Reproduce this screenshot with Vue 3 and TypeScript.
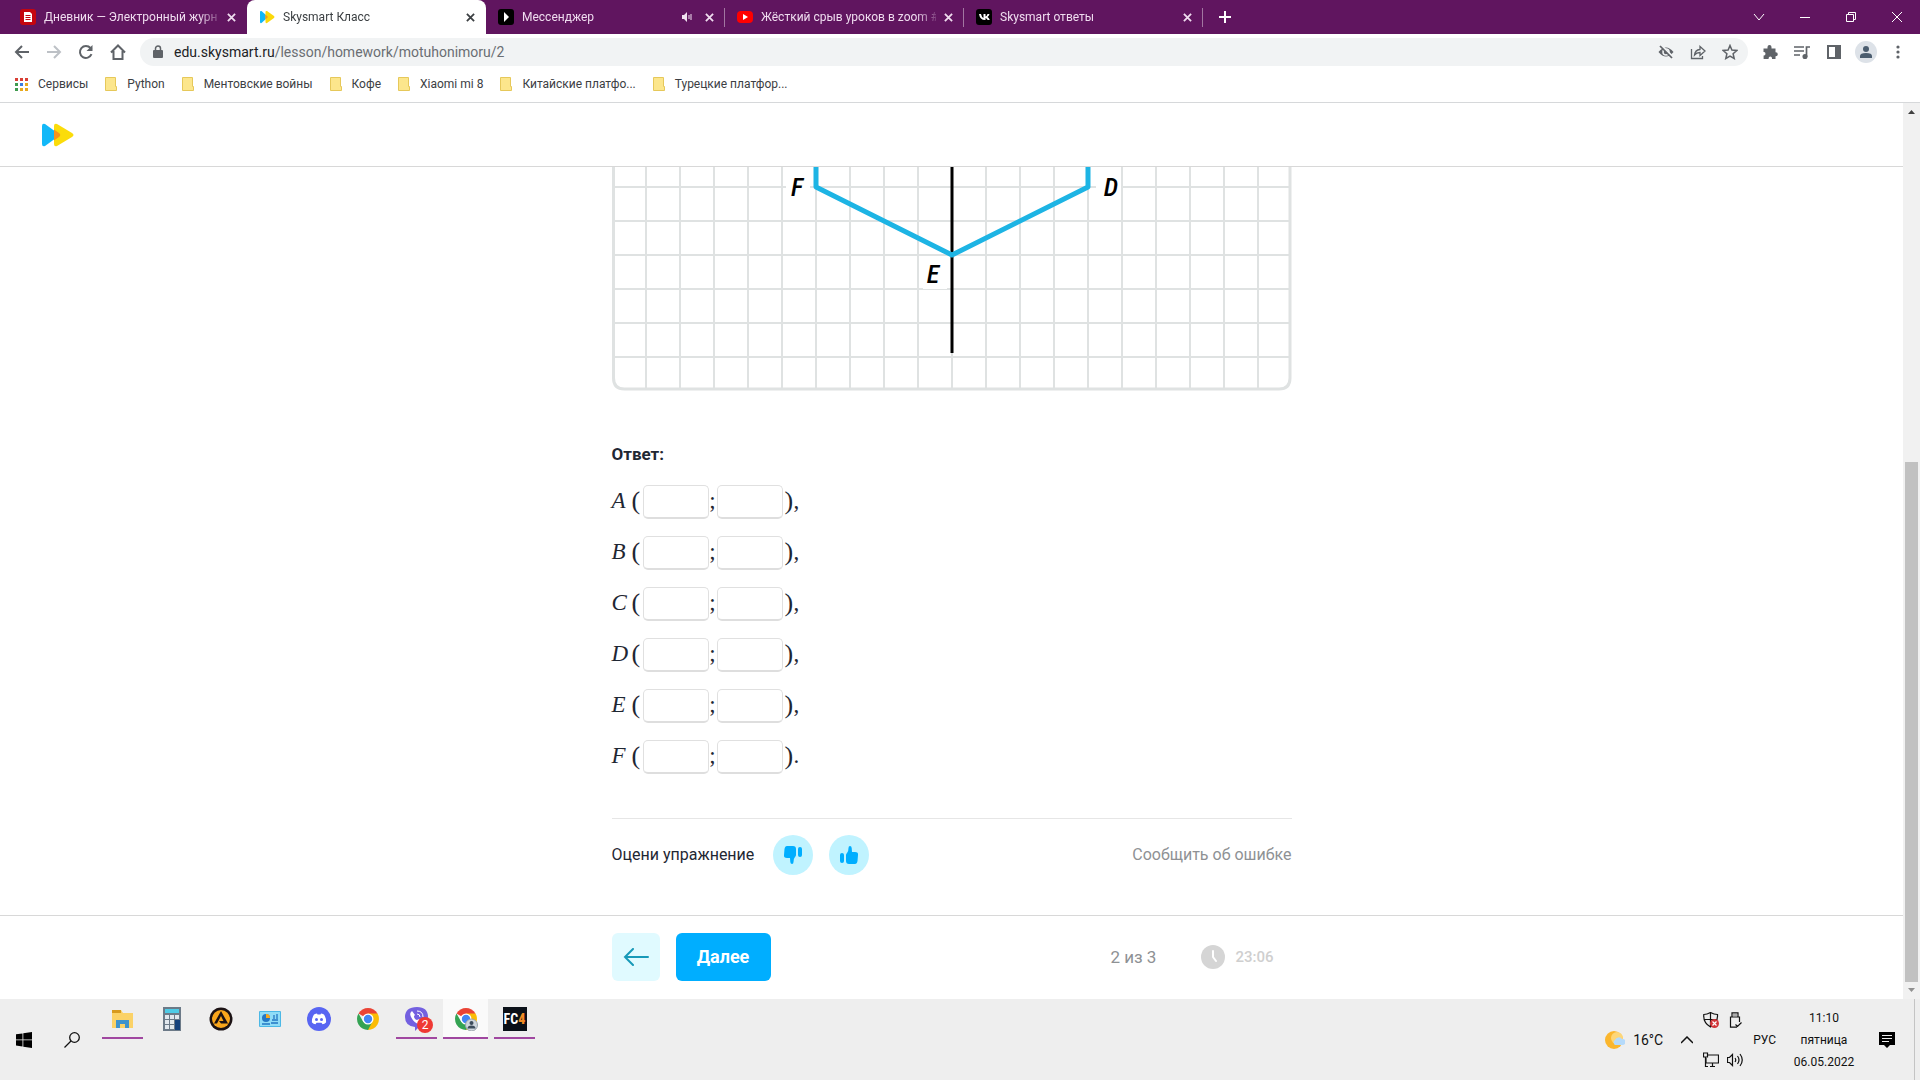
<script setup lang="ts">
import { reactive } from 'vue'

interface Tab {
  title: string
  icon: 'diary' | 'skysmart' | 'play' | 'youtube' | 'vk'
  active?: boolean
  sound?: boolean
}

const tabs: Tab[] = [
  { title: 'Дневник — Электронный журн', icon: 'diary' },
  { title: 'Skysmart Класс', icon: 'skysmart', active: true },
  { title: 'Мессенджер', icon: 'play', sound: true },
  { title: 'Жёсткий срыв уроков в zoom #', icon: 'youtube' },
  { title: 'Skysmart ответы', icon: 'vk' },
]

const bookmarks: string[] = [
  'Python',
  'Ментовские войны',
  'Кофе',
  'Xiaomi mi 8',
  'Китайские платфо...',
  'Турецкие платфор...',
]

const points = reactive(
  ['A', 'B', 'C', 'D', 'E', 'F'].map((name) => ({ name, x: '', y: '' })),
)

const columns = Array.from({ length: 19 }, (_, i) => (i + 1) * 34)
const rows = Array.from({ length: 6 }, (_, i) => 20 + i * 34)
const dots = ['#d93f35', '#d93f35', '#d93f35', '#3f9b4f', '#3b7de0', '#e8a91c', '#3f9b4f', '#e8a91c', '#e8a91c']
</script>

<template>
  <div class="screen">
    <header class="tabstrip">
      <div v-for="tab in tabs" :key="tab.title" class="tab" :class="{ active: tab.active }">
        <svg v-if="tab.icon === 'diary'" class="favicon" viewBox="0 0 16 16">
          <rect width="16" height="16" rx="3" fill="#c4060f" />
          <path d="M4 3h6l2 2v8H4z" fill="#fff" />
          <path d="M5.500 6.500h5M5.500 8.500h5M5.500 10.500h5" stroke="#c4060f" />
        </svg>
        <svg v-else-if="tab.icon === 'skysmart'" class="favicon" viewBox="0 0 32 28">
          <path d="M2 4q0-3 3-2l11 10q2 2 0 4L5 26q-3 1-3-2z" fill="#12b8f8" />
          <path d="M13 4q0-3 3-2l14 10q2 2 0 4L16 26q-3 1-3-2z" fill="#fbd90a" />
          <path d="M13 9l5 5-5 5z" fill="#f7931e" />
        </svg>
        <svg v-else-if="tab.icon === 'play'" class="favicon" viewBox="0 0 16 16">
          <rect width="16" height="16" rx="3" fill="#000" />
          <path d="M6 3l5 5-5 5z" fill="#fff" />
        </svg>
        <svg v-else-if="tab.icon === 'youtube'" class="favicon" viewBox="0 0 16 16">
          <rect y="2" width="16" height="12" rx="4" fill="#f00" />
          <path d="M6 5l5 3-5 3z" fill="#fff" />
        </svg>
        <svg v-else class="favicon" viewBox="0 0 16 16">
          <rect width="16" height="16" rx="3" fill="#000" />
          <path d="M3 5h2q.5 3 2.500 4V5h2v2.500q1.500-.5 2-2.500h2q-.5 2-2 3 1.700 1 2.300 3h-2.200q-.6-1.600-2.100-2v2H9Q4 11 3 5z" fill="#fff" />
        </svg>
        <span class="tab-title">{{ tab.title }}</span>
        <svg v-if="tab.sound" class="sound" viewBox="0 0 12 12">
          <path d="M1 4h2l3-3v10L3 8H1z" fill="#f0e0f0" />
          <path d="M8 4v4M10 3v6" stroke="#f0e0f0" fill="none" />
        </svg>
        <button class="tab-close" aria-label="Закрыть вкладку">
          <svg viewBox="0 0 10 10"><path d="M1 1l8 8M9 1l-8 8" /></svg>
        </button>
      </div>
      <button class="new-tab" aria-label="Новая вкладка">
        <svg viewBox="0 0 12 12"><path d="M6 0v12M0 6h12" stroke="#fff" stroke-width="2" /></svg>
      </button>
      <div class="window-buttons">
        <button aria-label="Поиск вкладок"><svg viewBox="0 0 12 12"><path d="M1 3l5 6 5-6" /></svg></button>
        <button aria-label="Свернуть"><svg viewBox="0 0 12 12"><path d="M1 6.500h10" /></svg></button>
        <button aria-label="Восстановить"><svg viewBox="0 0 12 12"><path d="M1.500 3.500h7v7h-7zM3.500 3.500v-2h7v7h-2" /></svg></button>
        <button aria-label="Закрыть"><svg viewBox="0 0 12 12"><path d="M1 1l10 10M11 1L1 11" /></svg></button>
      </div>
    </header>

    <div class="toolbar">
      <button class="tool" aria-label="Назад">
        <svg viewBox="0 0 16 16" class="line"><path d="M15 8H2M8 2L2 8l6 6" /></svg>
      </button>
      <button class="tool faded" aria-label="Вперёд">
        <svg viewBox="0 0 16 16" class="line"><path d="M1 8h13M8 2l6 6-6 6" /></svg>
      </button>
      <button class="tool" aria-label="Обновить">
        <svg viewBox="0 0 16 16" class="line"><path d="M13.500 10.200A6 6 0 1 1 12.500 4l1 1.500" /><path d="M14.500 1v6h-6z" fill="#5f6368" stroke="none" /></svg>
      </button>
      <button class="tool" aria-label="Домой">
        <svg viewBox="0 0 16 16" class="line"><path d="M1 8.500L8 1.500l7 7M3.500 7v8h9V7" /></svg>
      </button>
      <div class="omnibox">
        <svg class="lock" viewBox="0 0 10 14"><rect y="5" width="10" height="8" rx="1" fill="#5f6368" /><path d="M2.500 5V3.500a2.500 2.500 0 0 1 5 0V5" fill="none" stroke="#5f6368" stroke-width="1.500" /></svg>
        <div class="url">edu.skysmart.ru<span>/lesson/homework/motuhonimoru/2</span></div>
        <div class="omni-icons">
          <svg viewBox="0 0 16 16"><path d="M.5 8Q8-1 15.500 8 8 17 .5 8z" fill="#5f6368" /><circle cx="8" cy="8" r="3" fill="#5f6368" stroke="#f1f3f4" stroke-width="1.500" /><path d="M3.500 1.500l12 12" stroke="#f1f3f4" stroke-width="2" /><path d="M2 2l12 12" stroke="#5f6368" stroke-width="1.700" /></svg>
          <svg viewBox="0 0 16 16" fill="none" stroke="#5f6368" stroke-width="1.300"><path d="M1.500 5v9.500h11V12" /><path d="M4.500 11q.5-5 5.500-5.500V2.500l5 4.500-5 4.500V8.500Q6.500 8.500 4.500 11z" /></svg>
          <svg viewBox="0 0 16 16" fill="none" stroke="#5f6368" stroke-width="1.500"><path d="M8 1.500l1.900 4.600 4.900.4-3.700 3.200 1.100 4.800L8 12l-4.200 2.500 1.100-4.800L1.200 6.500l4.900-.4z" /></svg>
        </div>
      </div>
      <div class="extensions">
        <button class="tool" aria-label="Расширения"><svg viewBox="0 0 16 16"><path d="M1.500 4.500h4V3a2 2 0 0 1 4 0v1.500h4v3.800h.3a2 2 0 0 1 0 4h-.3V15h-3.500v-.8a1.700 1.700 0 0 0-3.400 0v.8h-5v-3.500h.5a1.800 1.800 0 0 0 0-3.500h-.6z" fill="#5f6368" /></svg></button>
        <button class="tool" aria-label="Медиа"><svg viewBox="0 0 16 16" fill="none" stroke="#5f6368" stroke-width="1.700"><path d="M0 3h10M0 7h10M0 11h6M12.500 13V3H16" /><circle cx="11" cy="12.500" r="1.700" fill="#5f6368" /></svg></button>
        <button class="tool" aria-label="Боковая панель"><svg viewBox="0 0 16 16"><path d="M1 1h14v14H1zM3 3v10h6V3z" fill="#5f6368" fill-rule="evenodd" /></svg></button>
        <button class="tool profile" aria-label="Профиль"><svg viewBox="0 0 22 22"><circle cx="11" cy="11" r="11" fill="#dde2e8" /><circle cx="11" cy="8" r="3" fill="#4b5d6f" /><path d="M5 17v-2q0-3 6-3t6 3v2z" fill="#4b5d6f" /></svg></button>
        <button class="tool" aria-label="Меню"><svg viewBox="0 0 16 16" fill="#5f6368"><circle cx="8" cy="3" r="1.600" /><circle cx="8" cy="8" r="1.600" /><circle cx="8" cy="13" r="1.600" /></svg></button>
      </div>
    </div>

    <nav class="bookmarks">
      <a href="#"><svg class="apps" viewBox="0 0 13 13"><rect v-for="(c, i) in dots" :key="i" :x="(i % 3) * 5" :y="Math.floor(i / 3) * 5" width="3" height="3" :fill="c" /></svg>Сервисы</a>
      <a v-for="b in bookmarks" :key="b" href="#"><svg class="folder" viewBox="0 0 12 14"><path d="M.5.5h10v9h1v4H.5z" fill="#fce68c" stroke="#e6c85a" /></svg>{{ b }}</a>
    </nav>

    <div class="viewport">
      <div class="page">
        <header class="page-header">
          <a href="#" aria-label="Skysmart">
            <svg viewBox="0 0 32 24">
              <path d="M0 3q0-3 3-2l11 8q3 3 0 6L3 23q-3 1-3-2z" fill="#12b8f8" />
              <path d="M12 3q0-3 3-2l15 9q3 2 0 4l-15 9q-3 1-3-2z" fill="#fbdc0a" />
              <path d="M12 6.500l5 3.500q2.500 2 0 4l-5 3.500z" fill="#f7931e" />
            </svg>
          </a>
        </header>

        <main class="content">
          <svg class="graph" viewBox="0 0 680 224">
            <g stroke="#dfe2e2" stroke-width="2">
              <path v-for="x in columns" :key="'c' + x" :d="`M${x} 0V222`" />
              <path v-for="y in rows" :key="'r' + y" :d="`M1 ${y}H679`" />
            </g>
            <path d="M1.500 0V211q0 11 11 11H667q11 0 11-11V0" fill="none" stroke="#dfe2e2" stroke-width="3" />
            <g fill="#fff">
              <rect x="174" y="4" width="24" height="32" />
              <rect x="484" y="4" width="25" height="32" />
              <rect x="311" y="90" width="24" height="32" />
            </g>
            <path d="M340 0V186" stroke="#000" stroke-width="3" />
            <path d="M204 0V20L340 88L476 20V0" fill="none" stroke="#1db4e4" stroke-width="5" stroke-linejoin="round" />
            <g class="labels" text-anchor="middle">
              <text x="185" y="29">F</text>
              <text x="499" y="29">D</text>
              <text x="321" y="116">E</text>
            </g>
          </svg>

          <h2 class="answer-title">Ответ:</h2>
          <div v-for="(p, i) in points" :key="p.name" class="answer">
            <span class="letter">{{ p.name }}</span>
            <span class="paren">(</span>
            <input v-model="p.x" type="text" :aria-label="`${p.name}, абсцисса`" />
            <span class="semi">;</span>
            <input v-model="p.y" type="text" :aria-label="`${p.name}, ордината`" />
            <span class="paren close">)</span>
            <span>{{ i === points.length - 1 ? '.' : ',' }}</span>
          </div>

          <div class="rating">
            <span class="rating-label">Оцени упражнение</span>
            <button aria-label="Не нравится">
              <svg viewBox="0 0 20 20" fill="#00aeff"><path d="M4 1h6q3 0 3 3v6q0 1-1 2-1.500 1.500-1.500 5 0 2-1.500 2T7.300 17l-.3-4H4q-3.500 0-3-3l.5-6Q2 1 4 1z" /><rect x="15" y="2" width="4" height="10" rx="2" /></svg>
            </button>
            <button aria-label="Нравится">
              <svg viewBox="0 0 20 20" fill="#00aeff"><path d="M16 19h-6q-3 0-3-3v-6q0-1 1-2 1.500-1.500 1.500-5 0-2 1.500-2t1.700 2l.3 4h3q3.500 0 3 3l-.5 6q-.5 3-2.500 3z" /><rect x="1" y="8" width="4" height="10" rx="2" /></svg>
            </button>
            <a href="#" class="report">Сообщить об ошибке</a>
          </div>
        </main>

        <footer class="page-footer">
          <div class="footer-inner">
            <button class="prev" aria-label="Предыдущее задание">
              <svg viewBox="0 0 26 18" fill="none" stroke="#1799b8" stroke-width="2"><path d="M25 9H2M10 1L2 9l8 8" stroke-linecap="round" /></svg>
            </button>
            <button class="next">Далее</button>
            <span class="progress">2 из 3</span>
            <svg class="clock" viewBox="0 0 24 24"><circle cx="12" cy="12" r="12" fill="#d5d5d5" /><path d="M12 6v6l3 4" fill="none" stroke="#fff" stroke-width="2" stroke-linecap="round" /></svg>
            <span class="timer">23:06</span>
          </div>
        </footer>
      </div>
      <div class="scrollbar">
        <svg viewBox="0 0 17 17"><path d="M5 11h7L8.500 7z" fill="#404040" /></svg>
        <div class="track"><div class="thumb"></div></div>
        <svg viewBox="0 0 17 17"><path d="M5 6h7l-3.500 4z" fill="#909090" /></svg>
      </div>
    </div>

    <div class="taskbar">
      <button class="system" aria-label="Пуск"><svg viewBox="0 0 16 16"><path d="M0 2.300l6.500-.9v6.100H0zM7.300 1.300L16 0v7.500H7.300zM0 8.300h6.500v6.200L0 13.600zM7.300 8.300H16V16l-8.700-1.200z" /></svg></button>
      <button class="system" aria-label="Поиск"><svg viewBox="0 0 16 16" fill="none" stroke="#111" stroke-width="1.300"><circle cx="10.500" cy="5.500" r="4.800" /><path d="M7 9L.5 15.500" /></svg></button>
      <div class="apps-row">
        <button class="app open" aria-label="Проводник">
          <svg viewBox="0 0 24 24"><path d="M1 3h9l2 3h10v15H1z" fill="#fbd267" /><path d="M1 3h9v3H1z" fill="#d79a1e" /><path d="M5 13h13v8h-4v-4H9v4H5z" fill="#3e93cc" /></svg>
        </button>
        <button class="app" aria-label="Калькулятор">
          <svg viewBox="0 0 24 24"><rect x="3" width="18" height="24" fill="#6c7a88" /><rect x="5" y="2" width="14" height="4" fill="#4fcbe6" /><g fill="#e2e8ee"><rect x="5" y="8" width="4" height="4" /><rect x="10" y="8" width="4" height="4" /><rect x="15" y="8" width="4" height="4" /><rect x="5" y="13" width="4" height="4" /><rect x="10" y="13" width="4" height="4" /><rect x="5" y="18" width="4" height="4" /><rect x="10" y="18" width="4" height="4" /></g><rect x="15" y="13" width="5" height="10" fill="#14417c" /></svg>
        </button>
        <button class="app" aria-label="AIMP">
          <svg viewBox="0 0 24 24"><circle cx="12" cy="12" r="11.500" fill="#1b1214" /><circle cx="12" cy="12" r="9" fill="#f9a61c" /><path d="M12 4l7 12.500h-7l-2-2.500h4.500L12 9l-4 7.500H5z" fill="#1b1214" /></svg>
        </button>
        <button class="app" aria-label="Панель управления">
          <svg viewBox="0 0 24 24"><rect x="1" y="4" width="22" height="16" rx="1" fill="#4bb8e6" /><rect x="2" y="5" width="20" height="14" fill="#8fdcf7" /><circle cx="8" cy="11" r="4" fill="#2577c4" /><path d="M8 11V7a4 4 0 0 1 4 4z" fill="#f9a61c" /><path d="M13 16h7M14 13h6M16 8v4M19 7v5M4 17h8" stroke="#2577c4" stroke-width="1.300" /></svg>
        </button>
        <button class="app" aria-label="Discord">
          <svg viewBox="0 0 24 24"><circle cx="12" cy="12" r="12" fill="#5865f2" /><path d="M7 7.500q2-1 3-1l.5 1h3l.5-1q1 0 3 1 2.500 4 2 8-1.500 1.500-3.500 1.800l-1-1.500h-5l-1 1.500Q6.500 17 5 15.500q-.5-4 2-8z" fill="#fff" /><circle cx="9.500" cy="12.500" r="1.500" fill="#5865f2" /><circle cx="14.500" cy="12.500" r="1.500" fill="#5865f2" /></svg>
        </button>
        <button class="app" aria-label="Chrome">
          <svg viewBox="0 0 24 24"><path d="M12 12L2.500 6.500A11 11 0 0 1 21.500 6.500z" fill="#ea4335" /><path d="M12 12V6.500h9.500A11 11 0 0 1 12 23z" fill="#fbbc05" /><path d="M2.500 6.500L7.200 14.700 12 17l4.500-2.500L12 23A11 11 0 0 1 2.500 6.500z" fill="#34a353" /><circle cx="12" cy="12" r="5.500" fill="#fff" /><circle cx="12" cy="12" r="4.200" fill="#4285f4" /></svg>
        </button>
        <button class="app open" aria-label="Viber">
          <svg viewBox="0 0 24 24"><path d="M12 0q11 0 11 10 0 9-9 10l-4 4v-4Q0 19 0 10 0 0 12 0z" fill="#7360e0" /><path d="M7 4q-3 2-1 6 3 6 8 7 3-1 3-3l-3-2-2 1q-3-1-3-4l1-1z" fill="#fff" /><path d="M12 4q6 0 6 6M12 7q3 0 3 3" stroke="#fff" fill="none" /></svg>
          <span class="badge">2</span>
        </button>
        <button class="app open current" aria-label="Chrome, профиль">
          <svg viewBox="0 0 24 24"><path d="M12 12L2.500 6.500A11 11 0 0 1 21.500 6.500z" fill="#ea4335" /><path d="M12 12V6.500h9.500A11 11 0 0 1 12 23z" fill="#fbbc05" /><path d="M2.500 6.500L7.200 14.700 12 17l4.500-2.500L12 23A11 11 0 0 1 2.500 6.500z" fill="#34a353" /><circle cx="12" cy="12" r="5.500" fill="#fff" /><circle cx="12" cy="12" r="4.200" fill="#4285f4" /><circle cx="17.500" cy="18" r="6" fill="#cfd6dd" stroke="#9aa3ab" /><circle cx="17.500" cy="16" r="2" fill="#3d4c5b" /><path d="M13.500 21.500q0-3 4-3t4 3z" fill="#3d4c5b" /></svg>
        </button>
        <button class="app open" aria-label="Far Cry 4"><span class="fc">FC<b>4</b></span></button>
      </div>

      <div class="weather">
        <svg viewBox="0 0 20 20"><circle cx="9" cy="10" r="9" fill="#fbb62d" /><circle cx="12" cy="8" r="6" fill="#fdd678" /><path d="M10 15a3 3 0 0 1 0-5 4 4 0 0 1 7-1 3 3 0 0 1 1 6z" fill="#b5dafa" /></svg>
        <span>16°C</span>
      </div>
      <button class="chevron" aria-label="Скрытые значки"><svg viewBox="0 0 12 8" fill="none" stroke="#111" stroke-width="1.500"><path d="M0 7l6-6 6 6" /></svg></button>
      <div class="tray">
        <svg viewBox="0 0 16 16"><path d="M7.500.5Q4 2.500.8 2.500 0 11 7.500 15 15 11 14.500 2.500 11 2.500 7.500.5zM7.500.5V15M1 7.500h13" fill="none" stroke="#111" stroke-width="1.200" /><circle cx="11.500" cy="11.500" r="4.500" fill="#d13438" /><path d="M9.500 9.500l4 4M13.500 9.500l-4 4" stroke="#fff" stroke-width="1.200" /></svg>
        <svg viewBox="0 0 16 16" fill="none" stroke="#111" stroke-width="1.200"><path d="M5 5V.8h6V5M10 15.200H3.500V5h9v5M7 2.500v1M9 2.500v1M8.500 12.500l2 2 4-4" /></svg>
        <svg viewBox="0 0 16 16" fill="none" stroke="#111" stroke-width="1.200"><path d="M5 3h10.500v8H3V6M7 14.500h5M9.500 11v3.500M.5 1h4v4h-4zM2.500 5v9.500H5" /></svg>
        <svg viewBox="0 0 16 16" fill="none" stroke="#111" stroke-width="1.200"><path d="M.5 5.500h2l3-3v11l-3-3h-2zM8 6q1.500 2 0 4M10.500 4q3 4 0 8M13 2q4.500 6 0 12" /></svg>
      </div>
      <span class="lang">РУС</span>
      <div class="datetime"><span>11:10</span><span>пятница</span><span>06.05.2022</span></div>
      <button class="notices" aria-label="Уведомления"><svg viewBox="0 0 16 16"><path d="M0 0h16v13h-5l-3 3-3-3H0z" fill="#000" /><path d="M3 3.500h10M3 6.500h10M3 9.500h7" stroke="#eee" /></svg></button>
    </div>
  </div>
</template>

<style>
body {
  margin: 0;
  background: #fff;
}
</style>

<style scoped>
.screen {
  display: flex;
  flex-direction: column;
  min-height: 100vh;
  font: 12px/16px Roboto, "Noto Sans", sans-serif;
  color: #3c4043;
}
.screen * {
  box-sizing: border-box;
}
button {
  display: flex;
  align-items: center;
  justify-content: center;
  padding: 0;
  border: 0;
  background: none;
  font: inherit;
  color: inherit;
  cursor: pointer;
}
a {
  color: inherit;
  text-decoration: none;
}
svg {
  display: block;
  flex: none;
}

/* browser tabs */
.tabstrip {
  display: flex;
  align-items: center;
  height: 34px;
  padding-left: 8px;
  background: #60155f;
  color: #efdcef;
}
.tab {
  display: flex;
  align-items: center;
  flex: 0 1 239px;
  min-width: 0;
  height: 34px;
  padding: 0 8px 0 12px;
  position: relative;
}
.tab:nth-child(n + 3)::after {
  content: "";
  position: absolute;
  right: 0;
  top: 8px;
  width: 1px;
  height: 19px;
  background: #a276a1;
}
.tab.active {
  background: #fff;
  color: #3c4043;
  border-radius: 8px 8px 0 0;
}
.favicon {
  width: 16px;
  height: 16px;
}
.tab-title {
  flex: 1;
  min-width: 0;
  margin-left: 8px;
  white-space: nowrap;
  mask-image: linear-gradient(to right, #000 calc(100% - 20px), rgb(0 0 0 / 20%));
}
.sound {
  width: 12px;
  height: 12px;
  margin-right: 4px;
}
.tab-close {
  width: 16px;
  height: 16px;
  margin-left: 4px;
}
.tab-close svg {
  width: 9px;
  height: 9px;
  fill: none;
  stroke: currentColor;
  stroke-width: 2;
}
.new-tab {
  width: 44px;
  height: 34px;
}
.new-tab svg {
  width: 12px;
  height: 12px;
}
.window-buttons {
  display: flex;
  margin-left: auto;
}
.window-buttons button {
  width: 46px;
  height: 28px;
}
.window-buttons svg {
  width: 12px;
  height: 12px;
  fill: none;
  stroke: #fff;
}

/* address bar */
.toolbar {
  display: flex;
  align-items: center;
  height: 36px;
  padding: 0 6px;
}
.tool {
  width: 32px;
  height: 32px;
}
.tool svg {
  width: 16px;
  height: 16px;
}
.tool.profile svg {
  width: 22px;
  height: 22px;
}
.line {
  fill: none;
  stroke: #5f6368;
  stroke-width: 2;
}
.faded .line {
  stroke: #bdc1c6;
}
.omnibox {
  display: flex;
  align-items: center;
  flex: 1;
  height: 28px;
  margin: 0 6px;
  padding: 0 10px 0 13px;
  border-radius: 14px;
  background: #f1f3f4;
}
.lock {
  width: 10px;
  height: 14px;
}
.url {
  margin-left: 11px;
  font-size: 14px;
  color: #202124;
}
.url span {
  color: #6a6e73;
}
.omni-icons {
  display: flex;
  gap: 16px;
  margin-left: auto;
}
.omni-icons svg {
  width: 16px;
  height: 16px;
}
.extensions {
  display: flex;
}

.bookmarks {
  display: flex;
  align-items: center;
  gap: 17px;
  height: 33px;
  padding: 0 15px 4px;
  border-bottom: 1px solid #d6d8da;
}
.bookmarks a {
  display: flex;
  align-items: center;
  gap: 10px;
}
.apps {
  width: 13px;
  height: 13px;
}
.folder {
  width: 12px;
  height: 14px;
}

/* page */
.viewport {
  display: flex;
  flex: 1;
}
.page {
  display: flex;
  flex-direction: column;
  flex: 1;
  min-width: 0;
  color: #1f2733;
}
.page-header {
  display: flex;
  align-items: center;
  height: 64px;
  padding-left: 42px;
  border-bottom: 1px solid #d8d8d8;
}
.page-header svg {
  width: 32px;
  height: 24px;
}
.content {
  flex: 1;
  width: 100%;
  max-width: 680px;
  margin: 0 auto;
}
.graph {
  width: 100%;
}
.labels {
  font: italic 500 26px "Liberation Sans Narrow", "Roboto Condensed", "Roboto", sans-serif;
}
.answer-title {
  margin: 51px 0 19px;
  font-size: 17px;
  line-height: 24px;
  font-weight: 700;
}
.answer {
  display: flex;
  align-items: center;
  height: 34px;
  margin-bottom: 17px;
  font-family: "Liberation Serif", serif;
  font-size: 23px;
  line-height: 26px;
}
.answer span {
  padding-bottom: 2px;
}
.letter {
  width: 20px;
  font-style: italic;
}
.paren {
  width: 11px;
  font-size: 26px;
}
.paren.close {
  width: 9px;
  margin-left: 2px;
}
.answer input {
  width: 66px;
  height: 34px;
  padding: 0 8px;
  border: 1px solid #e0e0e0;
  border-bottom: 2px solid #dedede;
  border-radius: 5px;
  background: #fff;
  font: inherit;
}
.semi {
  width: 8px;
  text-align: center;
}
.rating {
  display: flex;
  align-items: center;
  gap: 16px;
  margin-top: 44px;
  padding-top: 16px;
  border-top: 1px solid #e6e6e6;
  font-size: 16px;
}
.rating-label {
  min-width: 145px;
}
.rating button {
  width: 40px;
  height: 40px;
  border-radius: 50%;
  background: #c0f3ff;
}
.rating svg {
  width: 20px;
  height: 20px;
}
.report {
  margin-left: auto;
  color: #8e9194;
}
.page-footer {
  border-top: 1px solid #d8d8d8;
}
.footer-inner {
  display: flex;
  align-items: center;
  width: 100%;
  max-width: 680px;
  height: 83px;
  margin: 0 auto;
  padding: 0 18px 2px 0;
  font-size: 17px;
}
.prev {
  width: 48px;
  height: 48px;
  border-radius: 6px;
  background: #e0faff;
}
.prev svg {
  width: 26px;
  height: 18px;
}
.next {
  width: 95px;
  height: 48px;
  margin-left: 16px;
  border-radius: 6px;
  background: #00aeff;
  color: #fff;
  font-size: 18px;
  font-weight: 700;
}
.progress {
  margin-left: auto;
  color: #8e9194;
}
.clock {
  width: 24px;
  height: 24px;
  margin: 0 10px 0 45px;
}
.timer {
  font-size: 15px;
  font-weight: 500;
  color: #cfcfcf;
}

.scrollbar {
  display: flex;
  flex-direction: column;
  width: 17px;
  background: #f1f1f1;
}
.scrollbar svg {
  width: 17px;
  height: 17px;
}
.track {
  display: flex;
  flex-direction: column;
  justify-content: flex-end;
  flex: 1;
  padding: 0 2px;
}
.thumb {
  height: calc(60% + 3px);
  background: #c1c1c1;
}

/* taskbar */
.taskbar {
  display: flex;
  align-items: center;
  height: 81px;
  background: #eee;
  color: #111;
}
.system {
  width: 48px;
  height: 48px;
}
.system svg {
  width: 16px;
  height: 16px;
}
.apps-row {
  display: flex;
  gap: 4px;
  align-self: flex-start;
  margin: 0 auto 0 4px;
}
.app {
  position: relative;
  width: 45px;
  height: 40px;
}
.app svg {
  width: 24px;
  height: 24px;
}
.app.open::after {
  content: "";
  position: absolute;
  left: 2px;
  right: 2px;
  bottom: 0;
  height: 2px;
  background: #a047a0;
}
.app.current {
  background: #fafafa;
}
.app.current::after {
  left: 0;
  right: 0;
}
.badge {
  position: absolute;
  right: 6px;
  bottom: 6px;
  width: 16px;
  height: 16px;
  border-radius: 8px;
  background: #ef3934;
  color: #fff;
  line-height: 16px;
}
.fc {
  width: 24px;
  height: 24px;
  background: #0a1018;
  color: #fff;
  font: bold 14px/24px "Liberation Sans Narrow", "Roboto Condensed", sans-serif;
}
.fc b {
  color: #f08a24;
}
.weather {
  display: flex;
  align-items: center;
  gap: 8px;
  font-size: 14px;
}
.weather svg {
  width: 20px;
  height: 20px;
}
.chevron {
  width: 32px;
  height: 48px;
  margin-left: 8px;
}
.chevron svg {
  width: 12px;
  height: 8px;
}
.tray {
  display: grid;
  grid-template-columns: 16px 16px;
  gap: 24px 8px;
}
.tray svg {
  width: 16px;
  height: 16px;
}
.lang {
  margin-left: 10px;
}
.datetime {
  display: flex;
  flex-direction: column;
  align-items: center;
  gap: 6px;
  width: 80px;
  margin-left: 8px;
}
.notices {
  width: 46px;
  height: 48px;
  margin-right: 4px;
}
.notices svg {
  width: 16px;
  height: 16px;
}
.taskbar::after {
  content: "";
  align-self: stretch;
  width: 5px;
  border-left: 1px solid #c4c4c4;
}
</style>
